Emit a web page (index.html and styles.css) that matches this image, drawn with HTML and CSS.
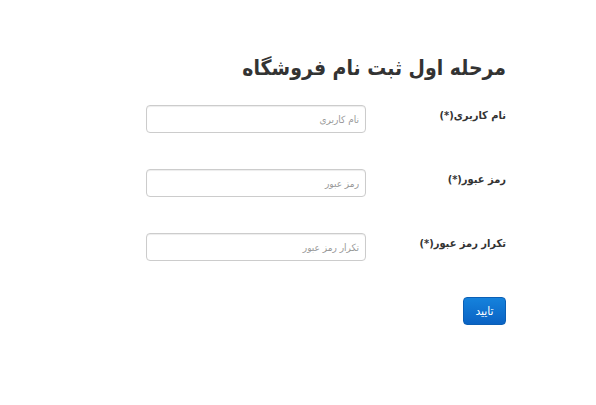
FILE: index.html
```html
<!DOCTYPE html>
<html lang="fa" dir="rtl">
<head>
<meta charset="utf-8">
<link rel="stylesheet" href="styles.css">
</head>
<body>
<div class="page">
  <h1 class="title">مرحله اول ثبت نام فروشگاه</h1>
  <form class="form">
    <div class="row">
      <label class="label">نام کاربری(*)</label>
      <input class="input" type="text" placeholder="نام کاربری">
    </div>
    <div class="row">
      <label class="label">رمز عبور(*)</label>
      <input class="input" type="password" placeholder="رمز عبور">
    </div>
    <div class="row">
      <label class="label">تکرار رمز عبور(*)</label>
      <input class="input" type="password" placeholder="تکرار رمز عبور">
    </div>
    <div class="actions">
      <button class="btn" type="button">تایید</button>
    </div>
  </form>
</div>
</body>
</html>
```
FILE: styles.css
```css
html, body {
  margin: 0;
  padding: 0;
  background: #fff;
}
body {
  font-family: "DejaVu Sans Condensed", "DejaVu Sans", sans-serif;
  color: #333;
  direction: rtl;
}
.page {
  width: 360px;
  margin: 0 90px 0 auto;
  padding-top: 50px;
}
.title {
  margin: 0 0 19px 0;
  font-size: 21px;
  font-weight: bold;
  line-height: 36px;
  color: #333;
}
.form {
  display: flex;
  flex-direction: column;
  gap: 36px;
}
.row {
  display: flex;
  align-items: flex-start;
}
.label {
  width: 140px;
  font-size: 11px;
  font-weight: bold;
  padding-top: 2px;
  line-height: 18px;
}
.input {
  box-sizing: border-box;
  width: 220px;
  height: 28px;
  border: 1px solid #ccc;
  border-radius: 4px;
  box-shadow: inset 0 1px 1px rgba(0,0,0,0.075);
  padding: 4px 6px;
  font-family: inherit;
  font-size: 10px;
  direction: rtl;
  background: #fff;
}
.input::placeholder {
  color: #999;
}
.actions {
  display: flex;
}
.btn {
  width: 43px;
  height: 28px;
  border: 1px solid #0b5fb5;
  border-radius: 4px;
  background: linear-gradient(#1582dc, #0a63c4);
  color: #fff;
  font-family: inherit;
  font-size: 12px;
  padding: 0;
}
```
